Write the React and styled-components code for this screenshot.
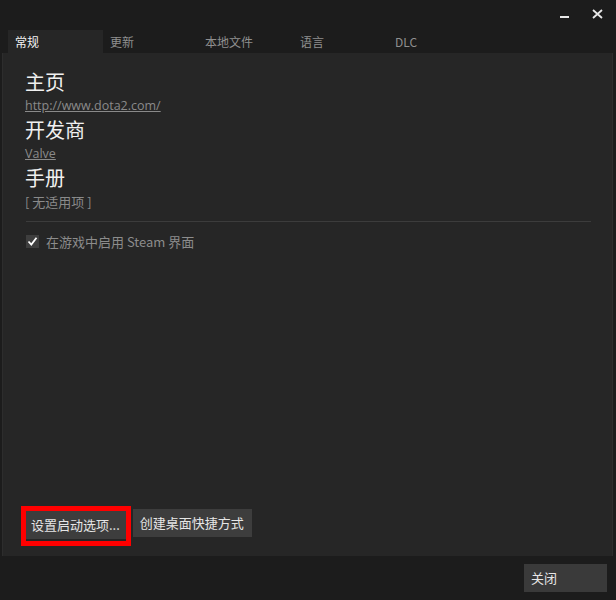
import React from "react";
import styled, { createGlobalStyle } from "styled-components";

const Global = createGlobalStyle`
  html, body {
    margin: 0;
    padding: 0;
    background: #1c1c1c;
  }
  body {
    font-family: "Noto Sans CJK SC", "Open Sans", sans-serif;
  }
`;

const Window = styled.div`
  width: 616px;
  height: 600px;
  background: #1c1c1c;
  display: flex;
  flex-direction: column;
  overflow: hidden;
`;

const TitleBar = styled.div`
  height: 30px;
  display: flex;
  justify-content: flex-end;
  align-items: flex-start;
  padding-right: 13px;
  gap: 20px;
`;

const WinButton = styled.div`
  width: 12px;
  height: 12px;
  margin-top: 8px;
  display: flex;
  align-items: center;
  justify-content: center;
`;

const Tabs = styled.div`
  height: 23px;
  display: flex;
  padding-left: 8px;
`;

const Tab = styled.div`
  width: 95px;
  padding-left: 7px;
  box-sizing: border-box;
  font-size: 12px;
  line-height: 23px;
  color: ${(p) => (p.$active ? "#f2f2f2" : "#8f8f8f")};
  background: ${(p) => (p.$active ? "#262626" : "transparent")};
`;

const Panel = styled.div`
  flex: 1;
  margin: 0 3px 0 2px;
  background: #262626;
  border-left: 1px solid #2d2d2d;
  border-right: 1px solid #2d2d2d;
  padding: 16px 21px 10px 22px;
  display: flex;
  flex-direction: column;
`;

const Heading = styled.div`
  font-size: 20px;
  line-height: 26px;
  color: #f0f0f0;
`;

const Link = styled.a`
  font-family: "Open Sans", "Noto Sans CJK SC", sans-serif;
  font-size: 12.5px;
  line-height: 22px;
  color: #8a8a8a;
  text-decoration: underline;
  align-self: flex-start;
`;

const Muted = styled.div`
  font-size: 13px;
  line-height: 20px;
  color: #8a8a8a;
  margin-top: 1px;
`;

const Divider = styled.div`
  height: 1px;
  background: #3c3c3c;
  margin: 9px 0 0 1px;
`;

const CheckRow = styled.label`
  display: flex;
  align-items: center;
  gap: 7px;
  height: 20px;
  margin-top: 9px;
  font-size: 13px;
  color: #8c8c8c;
`;

const Box = styled.span`
  width: 13px;
  height: 13px;
  background: #3e3e3e;
  display: flex;
  align-items: center;
  justify-content: center;
  margin-left: 1px;
`;

const ButtonRow = styled.div`
  margin-top: auto;
  display: flex;
  align-items: flex-start;
  gap: 2px;
  margin-left: -4px;
`;

const Highlight = styled.div`
  border: 5px solid #ff0000;
  background: #262626;
  padding-bottom: 2px;
`;

const Button = styled.div`
  height: 28px;
  line-height: 28px;
  padding: ${(p) => p.$pad || "0 8px 0 7px"};
  font-size: 13px;
  color: #e6e6e6;
  background: #3d3d3d;
  margin-top: ${(p) => p.$offset || 0}px;
  white-space: nowrap;
`;

const Footer = styled.div`
  height: 44px;
  display: flex;
  justify-content: flex-end;
  align-items: center;
  padding-right: 9px;
`;

const CloseButton = styled(Button)`
  width: 83px;
  box-sizing: border-box;
  background: #3a3a3a;
`;

export default function App() {
  return (
    <Window>
      <Global />
      <TitleBar>
        <WinButton>
          <svg width="10" height="12" viewBox="0 0 10 12">
            <rect x="0" y="8" width="9" height="2" fill="#e8e8e8" />
          </svg>
        </WinButton>
        <WinButton>
          <svg width="11" height="10" viewBox="0 0 11 10">
            <path d="M1 1 L10 9 M10 1 L1 9" stroke="#e8e8e8" strokeWidth="1.8" />
          </svg>
        </WinButton>
      </TitleBar>
      <Tabs>
        <Tab $active>常规</Tab>
        <Tab>更新</Tab>
        <Tab>本地文件</Tab>
        <Tab>语言</Tab>
        <Tab>DLC</Tab>
      </Tabs>
      <Panel>
        <Heading>主页</Heading>
        <Link>http://www.dota2.com/</Link>
        <Heading>开发商</Heading>
        <Link>Valve</Link>
        <Heading>手册</Heading>
        <Muted>[ 无适用项 ]</Muted>
        <Divider />
        <CheckRow>
          <Box>
            <svg width="11" height="11" viewBox="0 0 11 11">
              <path d="M1.5 5.5 L4.3 8.5 L9.5 1.8" stroke="#ffffff" strokeWidth="1.8" fill="none" />
            </svg>
          </Box>
          在游戏中启用 Steam 界面
        </CheckRow>
        <ButtonRow>
          <Highlight>
            <Button $pad="0 6px 0 5px">设置启动选项...</Button>
          </Highlight>
          <Button $offset={3} $pad="0 8px 0 7px">创建桌面快捷方式</Button>
        </ButtonRow>
      </Panel>
      <Footer>
        <CloseButton>关闭</CloseButton>
      </Footer>
    </Window>
  );
}
